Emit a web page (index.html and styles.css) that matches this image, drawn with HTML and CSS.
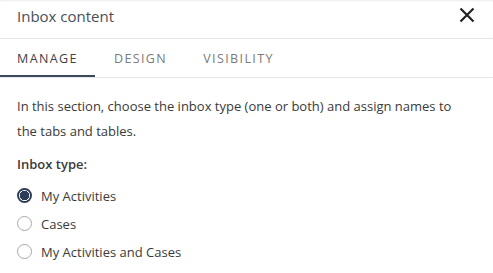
FILE: index.html
```html
<!DOCTYPE html>
<html lang="en">
<head>
    <meta charset="UTF-8">
    <meta name="viewport" content="width=device-width, initial-scale=1.0">
    <title>Inbox content</title>
    <link rel="stylesheet" href="styles.css">
</head>
<body>
    <div class="panel">
        <div class="panel-header">
            <span class="panel-title">Inbox content</span>
            <button class="close-btn" aria-label="Close">
                <svg width="16" height="16" viewBox="0 0 16 16">
                    <path d="M1.5 1.5 L14.5 14.5 M14.5 1.5 L1.5 14.5" stroke="#222" stroke-width="2.2" fill="none"/>
                </svg>
            </button>
        </div>

        <div class="tabs">
            <div class="tab active">MANAGE</div>
            <div class="tab">DESIGN</div>
            <div class="tab">VISIBILITY</div>
        </div>

        <div class="panel-body">
            <p class="intro">In this section, choose the inbox type (one or both) and assign names to the tabs and tables.</p>
            <div class="field-label">Inbox type:</div>
            <div class="radio-list">
                <label class="radio">
                    <span class="radio-dot checked"></span>
                    <span>My Activities</span>
                </label>
                <label class="radio">
                    <span class="radio-dot"></span>
                    <span>Cases</span>
                </label>
                <label class="radio">
                    <span class="radio-dot"></span>
                    <span>My Activities and Cases</span>
                </label>
            </div>
        </div>
    </div>
</body>
</html>
```

FILE: styles.css
```css
body {
    margin: 0;
    font-family: 'Open Sans', 'Noto Sans', sans-serif;
    background-color: #ffffff;
    color: #333333;
}

.panel {
    width: 493px;
    height: 273px;
    overflow: hidden;
    box-shadow: inset 0 2px 2px -1px rgba(0, 0, 0, 0.08);
}

.panel-header {
    display: flex;
    align-items: flex-start;
    justify-content: space-between;
    height: 32px;
    padding: 6px 18px 0 17px;
    border-bottom: 1px solid #e6e6e6;
}

.panel-title {
    font-size: 15px;
    line-height: 20px;
    color: #4a4f55;
}

.close-btn {
    display: flex;
    padding: 0;
    margin-top: 1px;
    border: none;
    background: none;
    cursor: pointer;
}

.tabs {
    display: flex;
    border-bottom: 1px solid #e6e6e6;
}

.tab {
    padding: 11px 17px 8px 17px;
    margin-right: 2px;
    font-size: 12.5px;
    letter-spacing: 1.4px;
    color: #7a7a7a;
    border-bottom: 2px solid transparent;
}

.tab.active {
    color: #3d4248;
    border-bottom-color: #3b4a5c;
}

.panel-body {
    padding: 16px 30px 0 17px;
    font-size: 13px;
}

.intro {
    margin: 0 0 11px 0;
    line-height: 25px;
    color: #3a3a3a;
}

.field-label {
    font-weight: 600;
    color: #3a3a3a;
    margin-bottom: 13px;
}

.radio-list {
    display: flex;
    flex-direction: column;
    gap: 9px;
}

.radio {
    display: flex;
    align-items: center;
    gap: 9px;
    height: 19px;
    color: #3a3a3a;
}

.radio-dot {
    box-sizing: border-box;
    width: 15px;
    height: 15px;
    border: 1px solid #a8a8a8;
    border-radius: 50%;
    background: #fff;
}

.radio-dot.checked {
    border: 2px solid #2c3e57;
    background: radial-gradient(circle, #2c3e57 0 4.5px, #fff 5px);
}
```
